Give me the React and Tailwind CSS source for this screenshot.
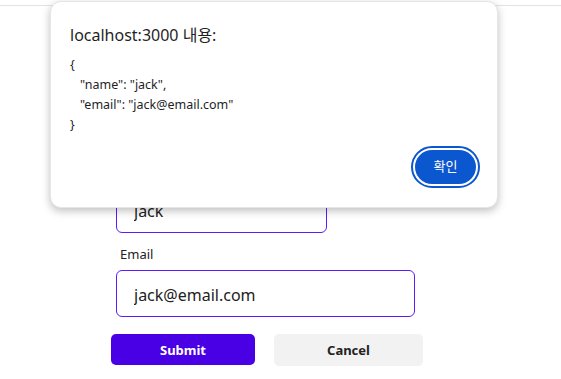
import React from "react";

export default function App() {
  const font = { fontFamily: '"Noto Sans", "Noto Sans CJK KR", sans-serif' };
  return (
    <div className="relative w-[561px] h-[379px] bg-white overflow-hidden text-[#222]" style={font}>
      <div className="h-[6px] border-b border-[#e3e3e3]" />
      <div className="pl-[116px] pt-[156px] flex flex-col">
        <label className="pl-[4px] text-[13px] leading-[16px] text-[#222]">Name</label>
        <input
          readOnly
          value="jack"
          className="mt-[8px] w-[211px] h-[47px] rounded-[6px] border border-[#5a1cff] pl-[17px] pt-[2px] text-[16px] text-[#222] outline-none"
        />
        <label className="mt-[13px] pl-[4px] text-[13px] leading-[16px] text-[#222]">Email</label>
        <input
          readOnly
          value="jack@email.com"
          className="mt-[8px] w-[299px] h-[47px] rounded-[6px] border border-[#5a1cff] pl-[17px] pt-[2px] text-[16px] text-[#222] outline-none"
        />
        <div className="mt-[17px] -ml-[5px] flex gap-[19px]">
          <button className="w-[144px] h-[31px] rounded-[5px] bg-[#4a00e4] text-white text-[13px] font-bold pt-[2px]">
            Submit
          </button>
          <button className="w-[149px] h-[32px] rounded-[5px] bg-[#f2f2f2] text-[#222] text-[13px] font-bold pt-[2px]">
            Cancel
          </button>
        </div>
      </div>

      <div className="absolute left-[50px] top-[1px] w-[448px] h-[207px] bg-white rounded-[11px] border border-[#e6e6e6] shadow-[0_3px_8px_rgba(0,0,0,0.25)] flex flex-col pl-[19px] pr-[17px]">
        <div className="mt-[22px] text-[16px] leading-[22px] text-[#1f1f1f]">localhost:3000 내용:</div>
        <div className="mt-[9px] text-[12.5px] leading-[20px] text-[#1f1f1f]">
          <div>{"{"}</div>
          <div className="pl-[10px]">"name": "jack",</div>
          <div className="pl-[10px]">"email": "jack@email.com"</div>
          <div>{"}"}</div>
        </div>
        <div className="mt-auto mb-[19px] flex justify-end">
          <div className="rounded-full border-[2px] border-[#0b57d0] p-[2px]">
            <button className="w-[61px] h-[34px] rounded-full bg-[#0b57d0] text-white text-[13px]">확인</button>
          </div>
        </div>
      </div>
    </div>
  );
}
